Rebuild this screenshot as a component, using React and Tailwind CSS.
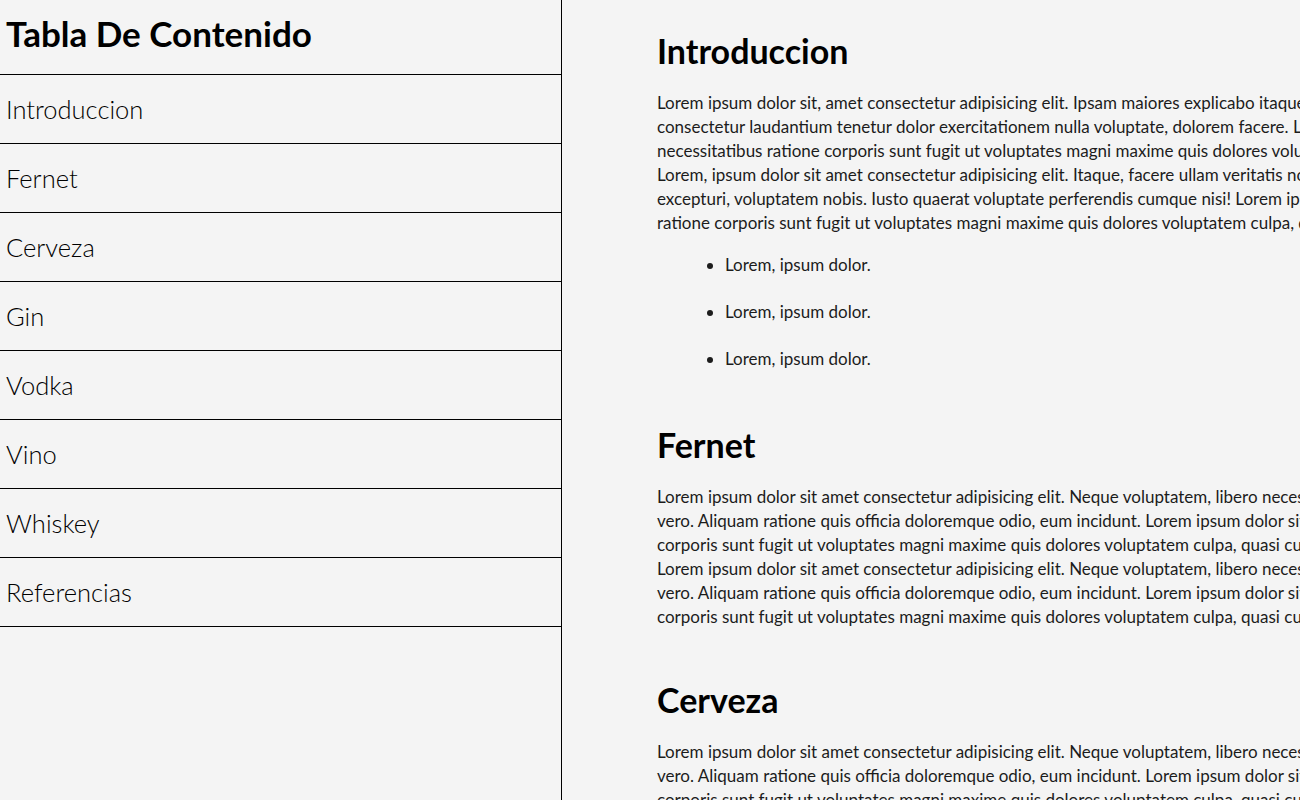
const menu = ['Introduccion', 'Fernet', 'Cerveza', 'Gin', 'Vodka', 'Vino', 'Whiskey', 'Referencias']

const intro = [
  'Lorem ipsum dolor sit, amet consectetur adipisicing elit. Ipsam maiores explicabo itaque quos eius nemo officia',
  'consectetur laudantium tenetur dolor exercitationem nulla voluptate, dolorem facere. Lorem ipsum dolor sit amet',
  'necessitatibus ratione corporis sunt fugit ut voluptates magni maxime quis dolores voluptatem culpa, quasi cum',
  'Lorem, ipsum dolor sit amet consectetur adipisicing elit. Itaque, facere ullam veritatis non dolorum eaque',
  'excepturi, voluptatem nobis. Iusto quaerat voluptate perferendis cumque nisi! Lorem ipsum dolor sit amet',
  'ratione corporis sunt fugit ut voluptates magni maxime quis dolores voluptatem culpa, quasi cum.',
]

const block = [
  'Lorem ipsum dolor sit amet consectetur adipisicing elit. Neque voluptatem, libero necessitatibus eius quos',
  'vero. Aliquam ratione quis officia doloremque odio, eum incidunt. Lorem ipsum dolor sit amet necessitatibus',
  'corporis sunt fugit ut voluptates magni maxime quis dolores voluptatem culpa, quasi cum reiciendis.',
]

function Lines({ lines }) {
  return (
    <p className="mt-[20px] whitespace-nowrap text-[17px] leading-[24px] text-[#1c1c1c]">
      {lines.map((l, i) => (
        <span key={i} className="block">{l}</span>
      ))}
    </p>
  )
}

function Section({ title, children }) {
  return (
    <section>
      <h2 className="text-[34px] font-bold leading-[40px] text-black">{title}</h2>
      {children}
    </section>
  )
}

export default function App() {
  return (
    <div className="flex h-screen overflow-hidden bg-[#f4f4f4] text-black" style={{ fontFamily: 'Lato, sans-serif' }}>
      <aside className="w-[562px] shrink-0 border-r border-black">
        <div className="flex h-[75px] items-center border-b border-black px-[6px] pb-[8px]">
          <h1 className="text-[35px] font-bold">Tabla De Contenido</h1>
        </div>
        <ul>
          {menu.map((m) => (
            <li key={m} className="flex h-[69px] items-center border-b border-black px-[6px] text-[25.5px] font-light">
              {m}
            </li>
          ))}
        </ul>
      </aside>
      <main className="min-w-0 flex-1 overflow-hidden pl-[95px] pt-[31px]">
        <div className="flex flex-col gap-[51px]">
          <Section title="Introduccion">
            <Lines lines={intro} />
            <ul className="mt-[18px] mb-[3px] list-disc pl-[68px] text-[17px] leading-[24px] text-[#1c1c1c]">
              <li className="mb-[23px]">Lorem, ipsum dolor.</li>
              <li className="mb-[23px]">Lorem, ipsum dolor.</li>
              <li>Lorem, ipsum dolor.</li>
            </ul>
          </Section>
          <Section title="Fernet">
            <Lines lines={[...block, ...block]} />
          </Section>
          <Section title="Cerveza">
            <Lines lines={[...block, ...block]} />
          </Section>
        </div>
      </main>
    </div>
  )
}
